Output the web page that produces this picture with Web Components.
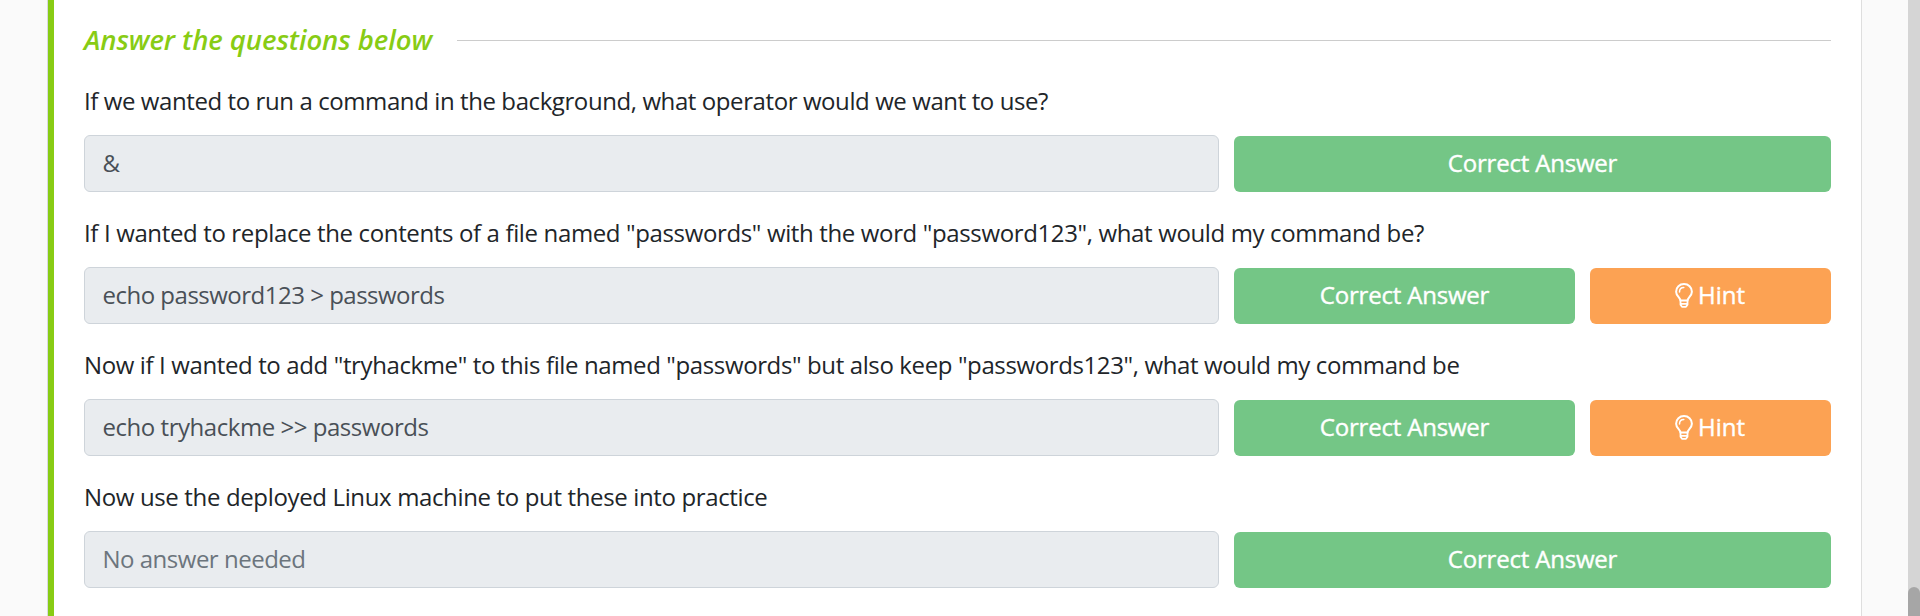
<!DOCTYPE html>
<html lang="en">
<head>
<meta charset="utf-8">
<title>Answer the questions below</title>
<style>
html,body{margin:0;height:100%;overflow:hidden;background:#fafafa}
body{font-family:"Open Sans","Noto Sans",sans-serif;font-size:24px;line-height:34px;color:#212529}
</style>
</head>
<body>
<task-page>
  <section-title span="348">Answer the questions below</section-title>
  <question-row span="964" answer="&amp;" answer-span="16">If we wanted to run a command in the background, what operator would we want to use?</question-row>
  <question-row span="1340" answer="echo password123 &gt; passwords" answer-span="342" hint>If I wanted to replace the contents of a file named "passwords" with the word "password123", what would my command be?</question-row>
  <question-row span="1375.5" answer="echo tryhackme &gt;&gt; passwords" answer-span="326" hint>Now if I wanted to add "tryhackme" to this file named "passwords" but also keep "passwords123", what would my command be</question-row>
  <question-row span="683.5" answer="No answer needed" answer-span="203" placeholder>Now use the deployed Linux machine to put these into practice</question-row>
</task-page>
<script>
const make = (host, html) => { host.attachShadow({mode:'open'}).innerHTML = html; return host.shadowRoot; };

/* Line of text tracked out to a given advance width */
customElements.define('tracked-text', class extends HTMLElement {
  connectedCallback(){
    if (this.shadowRoot) return;
    make(this, `<style>:host{display:inline-block;white-space:nowrap}</style><slot></slot>`);
    const n = this.textContent.length;
    this.style.letterSpacing = '0px';
    const w = this.getBoundingClientRect().width;
    const target = parseFloat(this.getAttribute('span'));
    if (w && target && n > 1) this.style.letterSpacing = ((target - w) / n).toFixed(4) + 'px';
  }
});

customElements.define('bulb-icon', class extends HTMLElement {
  connectedCallback(){
    make(this, `<style>:host{display:block;width:18px;height:25px}svg{display:block}</style>
    <svg width="18" height="25" viewBox="0 0 18 25" fill="none" stroke="#fff" stroke-width="2" stroke-linecap="round" stroke-linejoin="round">
      <path d="M5.4 17.4C5.2 14.3 1.1 12.9 1.1 8.7C1.1 4.2 4.6 1.1 9 1.1S16.9 4.2 16.9 8.7C16.9 12.9 12.8 14.3 12.6 17.4Z"/>
      <path d="M4.5 9C4.5 6.4 6.2 4.6 8.8 4.6" stroke-width="1.5"/>
      <path d="M5.5 17.6V21.8L7 23.8H11L12.5 21.8V17.6M5.6 20.8H12.4" stroke-width="1.8"/>
    </svg>`);
  }
});

customElements.define('section-title', class extends HTMLElement {
  connectedCallback(){
    make(this, `<style>
      :host{display:flex;align-items:center;height:36px;color:#88cc14;font-weight:600;font-style:italic;font-size:27.5px}
      i{flex:none;width:373px}
      hr{flex:1;border:0;height:1px;margin:0;background:#ccc}
    </style><i><tracked-text span="${this.getAttribute('span')}">${this.textContent}</tracked-text></i><hr>`);
  }
});

customElements.define('answer-field', class extends HTMLElement {
  connectedCallback(){
    make(this, `<style>
      :host{display:flex;align-items:center;box-sizing:border-box;height:57px;padding:0 18px 2px 17.5px;border:1px solid #ced4da;border-radius:6px;background:#e9ecef;color:#495057}
      :host([placeholder]){color:#6c757d}
    </style><slot></slot>`);
  }
});

customElements.define('action-button', class extends HTMLElement {
  connectedCallback(){
    make(this, `<style>
      :host{display:flex;align-items:center;justify-content:center;gap:5px;box-sizing:border-box;height:56px;padding-bottom:2px;border-radius:6px;background:#74c686;color:#fff;font-weight:500;-webkit-text-stroke:.4px #fff}
      :host([kind=hint]){background:#fca253;padding-right:1px}
    </style><slot></slot>`);
  }
});

customElements.define('question-row', class extends HTMLElement {
  connectedCallback(){
    const esc = s => s.replace(/&/g,'&amp;').replace(/</g,'&lt;').replace(/>/g,'&gt;');
    const hint = this.hasAttribute('hint');
    make(this, `<style>
      :host{display:block;height:132px}
      .q{height:36px;margin-bottom:15px}
      .row{display:grid;grid-template-columns:1135px ${hint ? '341px 241px' : '597px'};column-gap:15px;align-items:end}
    </style>
    <div class="q"><tracked-text span="${this.getAttribute('span')}">${esc(this.textContent)}</tracked-text></div>
    <div class="row">
      <answer-field ${this.hasAttribute('placeholder') ? 'placeholder' : ''}><tracked-text span="${this.getAttribute('answer-span')}">${esc(this.getAttribute('answer'))}</tracked-text></answer-field>
      <action-button><tracked-text span="169.5">Correct Answer</tracked-text></action-button>
      ${hint ? '<action-button kind="hint"><bulb-icon></bulb-icon><tracked-text span="47">Hint</tracked-text></action-button>' : ''}
    </div>`);
  }
});

customElements.define('scroll-track', class extends HTMLElement {
  connectedCallback(){
    make(this, `<style>
      :host{display:block;box-sizing:border-box;height:616px;padding-top:587px;background:#d5d5d5}
      div{height:29px;border-radius:6px 6px 0 0;background:#a6a6a6}
    </style><div></div>`);
  }
});

customElements.define('task-page', class extends HTMLElement {
  connectedCallback(){
    make(this, `<style>
      :host{display:grid;grid-template-columns:47px 1815px 46px 12px;height:616px;overflow:hidden}
      main{grid-column:2;box-sizing:border-box;border-left:1px solid #d9d9e0;border-right:1px solid #dedede;background:#fff;display:flex}
      .bar{width:6px;background:#88cc14}
      .body{padding:22px 0 0 30px;width:1747px;box-sizing:content-box}
      ::slotted(section-title){margin-bottom:26px}
      scroll-track{grid-column:4}
    </style><main><div class="bar"></div><div class="body"><slot></slot></div></main><scroll-track></scroll-track>`);
  }
});
</script>
</body>
</html>
